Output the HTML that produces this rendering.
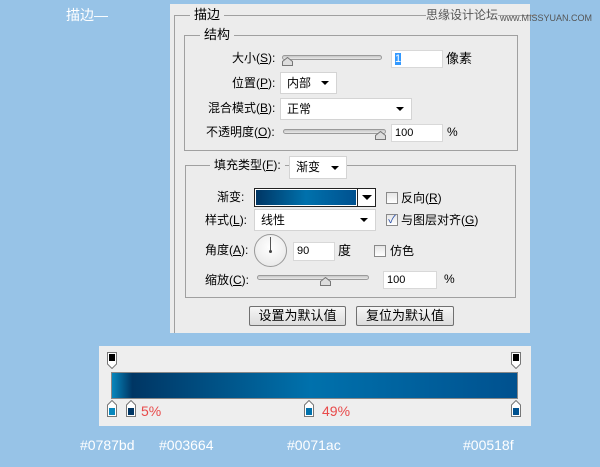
<!DOCTYPE html>
<html><head><meta charset="utf-8"><style>
*{margin:0;padding:0;box-sizing:border-box}
body{width:600px;height:467px;background:#97c3e7;position:relative;overflow:hidden;font-family:"Liberation Sans","Noto Sans CJK SC",sans-serif;font-size:12px;color:#000}
.a{position:absolute}
.t{position:absolute;white-space:nowrap;line-height:14px}
.box{position:absolute;border:1px solid #a0a0a0}
.lbl{position:absolute;background:#ececec;padding:0 4px;line-height:14px;font-size:13px}
.in{position:absolute;background:#fff;border:1px solid #d8d8d8;font-size:11px;padding-left:3px;line-height:16px}
.dd{position:absolute;background:#fff;border:1px solid #d4d4d4;font-size:12px;padding-left:6px}
.dd::after{content:"";position:absolute;right:7px;top:50%;margin-top:-2px;border-left:4px solid transparent;border-right:4px solid transparent;border-top:4px solid #000}
.sl{position:absolute;height:5px;border:1px solid #9a9a9a;border-radius:3px;background:linear-gradient(#c8c8c8,#e8e8e8)}
.th{position:absolute;width:11px;height:9px}
.cb{position:absolute;width:12px;height:12px;border:1px solid #8a8a8a;background:linear-gradient(#e6e6e6,#fff)}
.btn{position:absolute;height:20px;border:1px solid #707070;border-radius:2px;background:linear-gradient(#f6f6f6,#dcdcdc);text-align:center;font-size:13px;line-height:18px}
.stop{position:absolute;width:10px;height:17px}
.hx{position:absolute;color:#fff;font-size:14px;top:437px}
</style></head><body>
<div class="t" style="left:66px;top:8px;color:#fff;font-size:14px">描边—</div>
<div class="a" style="left:170px;top:4px;width:360px;height:329px;background:#ececec"></div>
<div class="box" style="left:174px;top:15px;width:362px;height:318px;border-right:none;border-bottom:none"></div>
<div class="lbl" style="left:190px;top:8px">描边</div>
<div class="t" style="left:426px;top:8px;color:#555;font-size:12px;background:#ececec">思缘设计论坛</div>
<div class="t" style="left:500px;top:11px;color:#555;font-size:9px">www.MISSYUAN.COM</div>
<div class="box" style="left:184px;top:35px;width:334px;height:116px"></div>
<div class="lbl" style="left:200px;top:28px">结构</div>
<div class="t" style="left:232px;top:51px">大小(<u>S</u>):</div>
<div class="sl" style="left:282px;top:55px;width:100px"></div>
<svg class="th" style="left:282px;top:57px" viewBox="0 0 11 9"><path d="M0.5 8.5V4.5L5.5 0.5L10.5 4.5V8.5Z" fill="#ddd" stroke="#777"/></svg>
<div class="in" style="left:391px;top:50px;width:52px;height:18px"><span style="background:#3399ff;color:#fff">1</span></div>
<div class="t" style="left:446px;top:52px;font-size:13px">像素</div>
<div class="t" style="left:232px;top:76px">位置(<u>P</u>):</div>
<div class="dd" style="left:280px;top:72px;width:57px;height:22px;line-height:20px">内部</div>
<div class="t" style="left:208px;top:101px">混合模式(<u>B</u>):</div>
<div class="dd" style="left:280px;top:98px;width:132px;height:22px;line-height:20px">正常</div>
<div class="t" style="left:206px;top:125px">不透明度(<u>O</u>):</div>
<div class="sl" style="left:283px;top:129px;width:103px"></div>
<svg class="th" style="left:375px;top:131px" viewBox="0 0 11 9"><path d="M0.5 8.5V4.5L5.5 0.5L10.5 4.5V8.5Z" fill="#ddd" stroke="#777"/></svg>
<div class="in" style="left:391px;top:124px;width:52px;height:18px;line-height:16px">100</div>
<div class="t" style="left:447px;top:125px">%</div>
<div class="box" style="left:185px;top:165px;width:331px;height:133px"></div>
<div class="lbl" style="left:210px;top:158px;font-size:12px">填充类型(<u>F</u>):</div>
<div class="dd" style="left:289px;top:156px;width:58px;height:23px;line-height:21px">渐变</div>
<div class="t" style="left:217px;top:190px">渐变:</div>
<div class="a" style="left:254px;top:188px;width:122px;height:19px;border:1px solid #222;background:#fff"></div>
<div class="a" style="left:256px;top:190px;width:100px;height:15px;background:linear-gradient(90deg,#003664,#0071ac 50%,#00518f)"></div>
<div class="a" style="left:357px;top:188px;width:1px;height:19px;background:#222"></div>
<div class="a" style="left:362px;top:195px;border-left:5px solid transparent;border-right:5px solid transparent;border-top:5px solid #000"></div>
<div class="cb" style="left:386px;top:192px"></div>
<div class="t" style="left:401px;top:191px">反向(<u>R</u>)</div>
<div class="t" style="left:205px;top:213px">样式(<u>L</u>):</div>
<div class="dd" style="left:254px;top:209px;width:122px;height:22px;line-height:20px">线性</div>
<div class="cb" style="left:386px;top:214px;color:#2a4fa8;font-size:11px;line-height:10px;text-align:center">✓</div>
<div class="t" style="left:401px;top:213px">与图层对齐(<u>G</u>)</div>
<div class="t" style="left:205px;top:243px">角度(<u>A</u>):</div>
<div class="a" style="left:254px;top:234px;width:33px;height:33px;border:1px solid #999;border-radius:50%;background:radial-gradient(circle at 50% 40%,#fff,#e4e4e4)"></div>
<div class="a" style="left:270px;top:237px;width:1px;height:14px;background:#555"></div>
<div class="a" style="left:269px;top:250px;width:3px;height:3px;border-radius:50%;background:#444"></div>
<div class="in" style="left:293px;top:242px;width:42px;height:19px">90</div>
<div class="t" style="left:338px;top:244px;font-size:13px">度</div>
<div class="cb" style="left:374px;top:245px"></div>
<div class="t" style="left:390px;top:244px">仿色</div>
<div class="t" style="left:205px;top:273px">缩放(<u>C</u>):</div>
<div class="sl" style="left:257px;top:275px;width:112px"></div>
<svg class="th" style="left:320px;top:277px" viewBox="0 0 11 9"><path d="M0.5 8.5V4.5L5.5 0.5L10.5 4.5V8.5Z" fill="#ddd" stroke="#777"/></svg>
<div class="in" style="left:383px;top:271px;width:54px;height:18px">100</div>
<div class="t" style="left:444px;top:272px">%</div>
<div class="btn" style="left:249px;top:306px;width:97px">设置为默认值</div>
<div class="btn" style="left:356px;top:306px;width:98px">复位为默认值</div>

<div class="a" style="left:99px;top:346px;width:432px;height:80px;background:#eeeeee"></div>
<div class="a" style="left:111px;top:372px;width:407px;height:27px;border:1px solid #888;background:linear-gradient(90deg,#0787bd 0%,#003664 5%,#0071ac 49%,#00518f 100%)"></div>
<svg class="stop" style="left:107px;top:352px" viewBox="0 0 10 17"><path d="M0.5 0.5H9.5V12L5 16.5L0.5 12Z" fill="#fff" stroke="#777"/><rect x="2" y="2" width="6" height="7" fill="#000"/></svg>
<svg class="stop" style="left:511px;top:352px" viewBox="0 0 10 17"><path d="M0.5 0.5H9.5V12L5 16.5L0.5 12Z" fill="#fff" stroke="#777"/><rect x="2" y="2" width="6" height="7" fill="#000"/></svg>
<svg class="stop" style="left:107px;top:400px" viewBox="0 0 10 17"><path d="M0.5 16.5H9.5V5L5 0.5L0.5 5Z" fill="#fff" stroke="#777"/><rect x="2" y="8" width="6" height="7" fill="#0787bd"/></svg>
<svg class="stop" style="left:126px;top:400px" viewBox="0 0 10 17"><path d="M0.5 16.5H9.5V5L5 0.5L0.5 5Z" fill="#fff" stroke="#777"/><rect x="2" y="8" width="6" height="7" fill="#003664"/></svg>
<svg class="stop" style="left:304px;top:400px" viewBox="0 0 10 17"><path d="M0.5 16.5H9.5V5L5 0.5L0.5 5Z" fill="#fff" stroke="#777"/><rect x="2" y="8" width="6" height="7" fill="#0071ac"/></svg>
<svg class="stop" style="left:511px;top:400px" viewBox="0 0 10 17"><path d="M0.5 16.5H9.5V5L5 0.5L0.5 5Z" fill="#fff" stroke="#777"/><rect x="2" y="8" width="6" height="7" fill="#00518f"/></svg>
<div class="t" style="left:141px;top:403px;color:#e84a4a;font-size:14px;line-height:16px">5%</div>
<div class="t" style="left:322px;top:403px;color:#e84a4a;font-size:14px;line-height:16px">49%</div>
<div class="hx" style="left:80px">#0787bd</div>
<div class="hx" style="left:159px">#003664</div>
<div class="hx" style="left:287px">#0071ac</div>
<div class="hx" style="left:463px">#00518f</div>
</body></html>
